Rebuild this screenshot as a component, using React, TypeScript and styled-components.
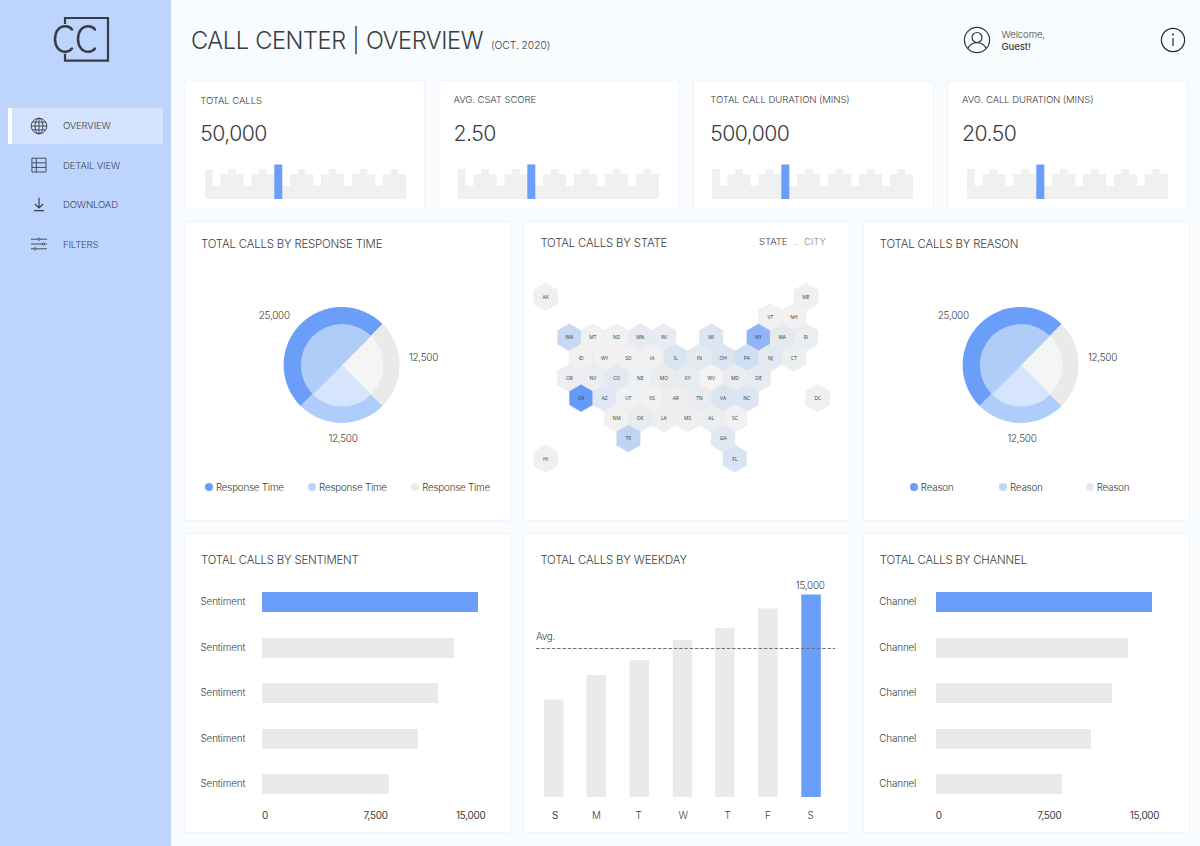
import React from "react";
import styled, { createGlobalStyle } from "styled-components";

const GlobalStyle = createGlobalStyle`
  *, *::before, *::after { box-sizing: border-box; }
  body { margin: 0; font-family: Inter, "Liberation Sans", sans-serif; font-weight: 300; color: #3b3c40; }
  svg { display: block; }
`;

const BLUE = "#6a9ef8";
const GREY = "#eaeaea";

const Page = styled.div`
  display: flex;
  width: 1200px;
  height: 846px;
  overflow: hidden;
  background: #f8fcff;
`;

const Sidebar = styled.aside`
  width: 171px;
  flex: none;
  background: #bdd5fd;
  padding: 16px 8px 0;
`;

const LogoWrap = styled.div`
  height: 91.5px;
  padding-left: 44px;
`;

const Nav = styled.nav`
  display: flex;
  flex-direction: column;
  gap: 3.5px;
`;

const NavItem = styled.a<{ $active?: boolean }>`
  display: flex;
  align-items: center;
  gap: 15px;
  width: 155px;
  height: 36px;
  padding-left: ${(p) => (p.$active ? 18 : 22)}px;
  border-left: ${(p) => (p.$active ? "4px solid #fff" : "0")};
  background: ${(p) => (p.$active ? "#d3e2fd" : "transparent")};
  font-size: 9.6px;
  letter-spacing: -0.17px;
  color: #3e444f;
`;

const Main = styled.main`
  flex: 1;
  padding-left: 13px;
`;

const Header = styled.header`
  display: flex;
  align-items: center;
  height: 80px;
  margin-bottom: 1px;
  padding-left: 7px;
`;

const Title = styled.h1`
  margin: 0;
  padding-top: 2px;
  flex: none;
  font-size: 23.6px;
  font-weight: 300;
  line-height: 30px;
  letter-spacing: -0.43px;
  word-spacing: 0.4px;
  width: 300px;
  white-space: nowrap;
`;

const Period = styled.span`
  flex: none;
  width: 472px;
  padding-top: 9px;
  font-size: 10.3px;
  line-height: 14px;
  letter-spacing: -0.05px;
`;

const Welcome = styled.div`
  flex: none;
  width: 168.5px;
  padding: 1px 0 0 10.5px;
  font-size: 9.6px;
  line-height: 11.5px;
  letter-spacing: -0.1px;
  b { display: block; font-weight: 500; }
`;

const KpiRow = styled.section`
  display: grid;
  grid-template-columns: repeat(4, 241px);
  column-gap: 13.4px;
  margin-bottom: 11px;
`;

const Card = styled.article`
  background: #fff;
  border: 1px solid #f1f5fb;
`;

const KpiCard = styled(Card)<{ $inset: number; $top: number }>`
  height: 129px;
  padding: ${(p) => p.$top}px 0 0 ${(p) => p.$inset}px;
`;

const KpiLabel = styled.div`
  font-size: 9.6px;
  line-height: 14px;
  letter-spacing: -0.11px;
`;

const KpiValue = styled.div<{ $lift: number }>`
  margin-top: ${(p) => p.$lift}px;
  font-size: 21.2px;
  line-height: 26px;
  letter-spacing: -0.55px;
`;

const SparkWrap = styled.div<{ $shift: number }>`
  margin: 18px 0 0 ${(p) => p.$shift}px;
`;

const PanelRow = styled.section`
  display: grid;
  grid-template-columns: repeat(3, 327px);
  column-gap: 12.4px;
  margin-bottom: 12px;
`;

const Panel = styled(Card)`
  height: 300px;
`;

const PanelHead = styled.div<{ $top: number }>`
  display: flex;
  justify-content: space-between;
  padding: ${(p) => p.$top}px 23.5px 0 16px;
`;

const PanelTitle = styled.h2`
  margin: 0;
  font-size: 11.4px;
  font-weight: 300;
  line-height: 16px;
  letter-spacing: -0.17px;
`;

const Toggle = styled.div`
  display: flex;
  gap: 7px;
  font-size: 9.6px;
  line-height: 14px;
  letter-spacing: -0.08px;
  span { color: #85868a; }
`;

const ChartText = styled.text`
  font-size: 9.9px;
  letter-spacing: -0.25px;
  fill: #3b3c40;
`;

const StateText = styled.text`
  font-family: "Open Sans", "Noto Sans", sans-serif;
  font-weight: 400;
  font-size: 4.9px;
  fill: #33353a;
  text-anchor: middle;
`;

const Legend = styled.ul<{ $gap: number; $pad: number; $pull: number }>`
  display: flex;
  gap: ${(p) => p.$gap}px;
  margin: 22px 0 0;
  padding: 0 0 0 ${(p) => p.$pad}px;
  list-style: none;
  font-size: 9.9px;
  line-height: 14px;
  letter-spacing: -0.26px;
  li:last-child { margin-left: ${(p) => -p.$pull}px; }
`;

const LegendItem = styled.li<{ $color: string }>`
  display: flex;
  align-items: center;
  gap: 3px;
  white-space: nowrap;
  &::before {
    content: "";
    width: 8px;
    height: 8px;
    border-radius: 50%;
    background: ${(p) => p.$color};
  }
`;

const BarList = styled.div`
  display: flex;
  flex-direction: column;
  gap: 25.6px;
  padding: 24px 0 0 15px;
`;

const BarRow = styled.div<{ $label: number }>`
  display: grid;
  grid-template-columns: ${(p) => p.$label}px 1fr;
  height: 20px;
  font-size: 9.9px;
  line-height: 18px;
  letter-spacing: -0.16px;
`;

const BarLabel = styled.span`
  padding-left: 0.5px;
`;

const Bar = styled.div<{ $strong: boolean }>`
  height: 20px;
  background: ${(p) => (p.$strong ? BLUE : GREY)};
`;

const Axis = styled.div<{ $pad: number }>`
  display: flex;
  padding: 13.5px 0 0 ${(p) => p.$pad}px;
  font-size: 9.9px;
  font-weight: 400;
  line-height: 14px;
  letter-spacing: -0.25px;
  span:nth-child(1) { width: 101.5px; }
  span:nth-child(2) { width: 92.5px; }
`;

const DonutArea = styled.div`
  padding-top: 6px;
`;

const MapArea = styled.div`
  padding-top: 21px;
`;

function Logo() {
  return (
    <svg width="60" height="48" viewBox="0 0 60 48" fill="none" stroke="#383c44" strokeWidth="2.2">
      <path d="M13 8V2H56V44.6H13V37.8" />
      <path strokeWidth="2.5" strokeLinecap="round" d="M20 13.5C18.3 11.2 16 10.3 13.3 10.3C7 10.3 3 15.5 3 23S7 35.7 13.3 35.7C16 35.7 18.3 34.8 20 32.5" />
      <path strokeWidth="2.5" strokeLinecap="round" d="M43 13.5C41.3 11.2 39 10.3 36.3 10.3C30 10.3 26 15.5 26 23S30 35.7 36.3 35.7C39 35.7 41.3 34.8 43 32.5" />
    </svg>
  );
}

const iconProps = { width: 18, height: 18, viewBox: "0 0 18 18", fill: "none", stroke: "#3a404c", strokeWidth: 0.9 };

const GlobeIcon = () => (
  <svg {...iconProps}>
    <circle cx="9" cy="9" r="7.8" />
    <ellipse cx="9" cy="9" rx="3.9" ry="7.8" />
    <path d="M9 1.2V16.8M1.2 9H16.8M2.3 5.1H15.7M2.3 12.9H15.7" />
  </svg>
);
const TableIcon = () => (
  <svg {...iconProps}>
    <path d="M1.9 2.2H16V16H1.9ZM6.3 2.2V16M1.9 6.8H16M1.9 11.4H16" />
  </svg>
);
const DownloadIcon = () => (
  <svg {...iconProps} strokeWidth={1.2}>
    <path d="M9 1.8V11.8M4.9 8L9 12L13.1 8M4 14.6H14" />
  </svg>
);
const FiltersIcon = () => (
  <svg {...iconProps}>
    <path d="M1 4.2H7.8M10.2 4.2H17M1 9H12.3M14.7 9H17M1 13.8H3.8M6.2 13.8H17" />
    <circle cx="9" cy="4.2" r="1.1" />
    <circle cx="13.5" cy="9" r="1.1" />
    <circle cx="5" cy="13.8" r="1.1" />
  </svg>
);
const UserIcon = () => (
  <svg width="28" height="28" viewBox="0 0 28 28" fill="none" stroke="#33353a" strokeWidth="1.2">
    <circle cx="14" cy="14" r="12.6" />
    <circle cx="14" cy="11.5" r="5" />
    <path d="M4.8 22.4C7 18.5 10.2 16.6 14 16.6S21 18.5 23.2 22.4" />
  </svg>
);
const InfoIcon = () => (
  <svg width="26" height="26" viewBox="0 0 26 26" fill="none" stroke="#25272b" strokeWidth="1.2">
    <circle cx="13" cy="13" r="11.6" />
    <path d="M13 11V19" />
    <circle cx="13" cy="7.5" r="1" fill="#25272b" stroke="none" />
  </svg>
);

const SPARK = [30, 13, 25, 30, 25, 13, 25, 30, 25, 34.5, 13, 25, 30, 25, 13, 25, 30, 25, 13, 25, 30, 25, 13, 25, 30, 25];

function Spark() {
  const step = 201 / SPARK.length;
  const path = SPARK.map((v, i) => `V${34.5 - (i === 9 ? 13 : v)}H${((i + 1) * step).toFixed(2)}`).join("");
  return (
    <svg width="202" height="35" viewBox="0 -0.5 202 35">
      <path d={`M0 34.5${path}V34.5Z`} fill="#f0f0f0" />
      <rect x="69.3" y="0" width="8" height="34.5" fill={BLUE} />
    </svg>
  );
}

const KPIS = [
  { label: "TOTAL CALLS", value: "50,000", inset: 15.3, top: 12, lift: 12, shift: 4.7 },
  { label: "AVG. CSAT SCORE", value: "2.50", inset: 14.2, top: 11, lift: 13, shift: 4.8 },
  { label: "TOTAL CALL DURATION (MINS)", value: "500,000", inset: 16.5, top: 11, lift: 13, shift: 2 },
  { label: "AVG. CALL DURATION (MINS)", value: "20.50", inset: 13.9, top: 11, lift: 13, shift: 4.7 },
];

function Donut() {
  return (
    <svg width="325" height="200" viewBox="0 0 325 200">
      <g transform="translate(156.6 107)">
        <path d="M0 0L41 -41A57.9 57.9 0 0 0 -41 41Z" fill={BLUE} />
        <path d="M0 0L-41 41A57.983 57.983 0 0 0 41 41Z" fill="#afcdfa" />
        <path d="M0 0L41 41A57.983 57.983 0 0 0 41 -41Z" fill={GREY} />
      </g>
      <g transform="translate(157.1 107.3)">
        <path d="M0 0L29.2 -29.2A41.2 41.2 0 0 0 -29.2 29.2Z" fill="#b0cdfa" />
        <path d="M0 0L-29.2 29.2A41.295 41.295 0 0 0 29.2 29.2Z" fill="#d6e5fd" />
        <path d="M0 0L29.2 29.2A41.295 41.295 0 0 0 29.2 -29.2Z" fill="#f5f5f5" />
      </g>
      <ChartText x="73.8" y="61">25,000</ChartText>
      <ChartText x="223.9" y="103">12,500</ChartText>
      <ChartText x="143.4" y="184">12,500</ChartText>
    </svg>
  );
}

type StateCell = [string, number, number, string];
const G = "#f1f1f2";
const L = "#ebedf1";
const M = "#e4e9f1";
const STATES: StateCell[] = [
  ["AK", 0, 0, "#f0f0f0"], ["ME", 22, 0, "#f0f0f1"],
  ["VT", 19, 1, G], ["NH", 21, 1, G],
  ["WA", 2, 2, "#c6d8f4"], ["MT", 4, 2, G], ["ND", 6, 2, G], ["MN", 8, 2, "#e7eaf0"], ["WI", 10, 2, "#e8ebf0"],
  ["MI", 14, 2, "#dce6f3"], ["NY", 18, 2, "#8fb5f6"], ["MA", 20, 2, "#e5eaf1"], ["RI", 22, 2, L],
  ["ID", 3, 3, G], ["WY", 5, 3, G], ["SD", 7, 3, G], ["IA", 9, 3, G], ["IL", 11, 3, "#dae5f2"],
  ["IN", 13, 3, "#e4eaf1"], ["OH", 15, 3, "#dbe5f1"], ["PA", 17, 3, "#cfdff3"], ["NJ", 19, 3, M], ["CT", 21, 3, "#eceef0"],
  ["OR", 2, 4, "#edeef1"], ["NV", 4, 4, L], ["CO", 6, 4, M], ["NE", 8, 4, "#eff0f1"], ["MO", 10, 4, "#e9ebef"],
  ["KY", 12, 4, "#e8ebf0"], ["WV", 14, 4, "#f4f4f4"], ["MD", 16, 4, "#ebecf0"], ["DE", 18, 4, "#e9eaf0"],
  ["CA", 3, 5, "#659af6"], ["AZ", 5, 5, "#e1e8f3"], ["UT", 7, 5, G], ["KS", 9, 5, G], ["AR", 11, 5, "#efeff0"],
  ["TN", 13, 5, "#e9ebee"], ["VA", 15, 5, "#d9e5f1"], ["NC", 17, 5, "#dde5f2"], ["DC", 23, 5, "#f0f0f0"],
  ["NM", 6, 6, G], ["OK", 8, 6, "#e8ebf0"], ["LA", 10, 6, "#edeef0"], ["MS", 12, 6, "#eeeff0"],
  ["AL", 14, 6, "#eceef0"], ["SC", 16, 6, "#f1f1f1"],
  ["TX", 7, 7, "#bfd4f5"], ["GA", 15, 7, "#e0e8f2"],
  ["HI", 0, 8, "#f0f0f0"], ["FL", 16, 8, "#d8e4f3"],
];

function HexMap() {
  return (
    <svg width="325" height="210" viewBox="523.9 272 325 210">
      {STATES.map(([name, col, row, fill]) => {
        const x = 545.5 + col * 11.83;
        const y = 297 + row * 20.22;
        return (
          <g key={name} transform={`translate(${x.toFixed(1)} ${y.toFixed(1)})`}>
            <path d="M0 -13.8L11.9 -6.9V6.9L0 13.8L-11.9 6.9V-6.9Z" fill={fill} stroke="#e9e9ec" strokeWidth="0.4" />
            <StateText y="1.8">{name}</StateText>
          </g>
        );
      })}
    </svg>
  );
}

const BAR_WIDTHS = [216, 192, 176, 155.5, 126.5];

function BarPanel({ title, label, labelWidth }: { title: string; label: string; labelWidth: number }) {
  return (
    <Panel>
      <PanelHead $top={18}><PanelTitle>{title}</PanelTitle></PanelHead>
      <BarList>
        {BAR_WIDTHS.map((w, i) => (
          <BarRow key={w} $label={labelWidth}>
            <BarLabel>{label}</BarLabel>
            <Bar $strong={i === 0} style={{ width: w }} />
          </BarRow>
        ))}
      </BarList>
      <Axis $pad={labelWidth + 15}>
        <span>0</span><span>7,500</span><span>15,000</span>
      </Axis>
    </Panel>
  );
}

function DonutPanel({ title, label, gap, pad, pull = 0 }: { title: string; label: string; gap: number; pad: number; pull?: number }) {
  return (
    <Panel>
      <PanelHead $top={14}><PanelTitle>{title}</PanelTitle></PanelHead>
      <DonutArea><Donut /></DonutArea>
      <Legend $gap={gap} $pad={pad} $pull={pull}>
        <LegendItem $color={BLUE}>{label}</LegendItem>
        <LegendItem $color="#bfd4fb">{label}</LegendItem>
        <LegendItem $color={GREY}>{label}</LegendItem>
      </Legend>
    </Panel>
  );
}

const WEEK = [
  { day: "S", x: 544, top: 699.5, tx: 552 },
  { day: "M", x: 586.5, top: 675, tx: 592 },
  { day: "T", x: 629.5, top: 660, tx: 635.5 },
  { day: "W", x: 672.7, top: 640, tx: 678.5 },
  { day: "T", x: 715, top: 628, tx: 724.5 },
  { day: "F", x: 758, top: 608.5, tx: 765 },
  { day: "S", x: 801.3, top: 594.5, tx: 807.5 },
];

function WeekChart() {
  return (
    <svg width="325" height="260" viewBox="524 568 325 260">
      {WEEK.map((d, i) => (
        <g key={d.x}>
          <rect x={d.x} y={d.top} width="19.5" height={797 - d.top} fill={i === 6 ? BLUE : GREY} />
          <ChartText x={d.tx} y="818.5" fontWeight={i === 0 ? 400 : 300}>{d.day}</ChartText>
        </g>
      ))}
      <path d="M536 648.5H835" stroke="#6d7378" strokeWidth="1" strokeDasharray="3.5 1.8" />
      <ChartText x="536" y="640">Avg.</ChartText>
      <ChartText x="795.8" y="589">15,000</ChartText>
    </svg>
  );
}

export default function App() {
  return (
    <Page>
      <GlobalStyle />
      <Sidebar>
        <LogoWrap><Logo /></LogoWrap>
        <Nav>
          <NavItem $active><GlobeIcon />OVERVIEW</NavItem>
          <NavItem><TableIcon />DETAIL VIEW</NavItem>
          <NavItem><DownloadIcon />DOWNLOAD</NavItem>
          <NavItem><FiltersIcon />FILTERS</NavItem>
        </Nav>
      </Sidebar>
      <Main>
        <Header>
          <Title>CALL CENTER | OVERVIEW</Title>
          <Period>(OCT. 2020)</Period>
          <UserIcon />
          <Welcome>Welcome,<b>Guest!</b></Welcome>
          <InfoIcon />
        </Header>
        <KpiRow>
          {KPIS.map((k) => (
            <KpiCard key={k.label} $inset={k.inset} $top={k.top}>
              <KpiLabel>{k.label}</KpiLabel>
              <KpiValue $lift={k.lift}>{k.value}</KpiValue>
              <SparkWrap $shift={k.shift}><Spark /></SparkWrap>
            </KpiCard>
          ))}
        </KpiRow>
        <PanelRow>
          <DonutPanel title="TOTAL CALLS BY RESPONSE TIME" label="Response Time" gap={24.4} pad={20} />
          <Panel>
            <PanelHead $top={13}>
              <PanelTitle>TOTAL CALLS BY STATE</PanelTitle>
              <Toggle>STATE <span>.</span> <span>CITY</span></Toggle>
            </PanelHead>
            <MapArea><HexMap /></MapArea>
          </Panel>
          <DonutPanel title="TOTAL CALLS BY REASON" label="Reason" gap={45.6} pad={46} pull={2.5} />
        </PanelRow>
        <PanelRow>
          <BarPanel title="TOTAL CALLS BY SENTIMENT" label="Sentiment" labelWidth={62} />
          <Panel>
            <PanelHead $top={18}><PanelTitle>TOTAL CALLS BY WEEKDAY</PanelTitle></PanelHead>
            <WeekChart />
          </Panel>
          <BarPanel title="TOTAL CALLS BY CHANNEL" label="Channel" labelWidth={57} />
        </PanelRow>
      </Main>
    </Page>
  );
}
